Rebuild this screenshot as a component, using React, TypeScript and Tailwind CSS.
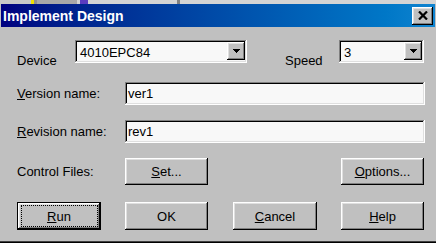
import React from 'react';

const raised =
  'shadow-[inset_-1px_-1px_#000,inset_1px_1px_#fff,inset_-2px_-2px_#808080,inset_2px_2px_#dfdfdf]';

function Arrow() {
  return (
    <svg width="7" height="4" viewBox="0 0 7 4" shapeRendering="crispEdges">
      <rect x="0" y="0" width="7" height="1" fill="#000" />
      <rect x="1" y="1" width="5" height="1" fill="#000" />
      <rect x="2" y="2" width="3" height="1" fill="#000" />
      <rect x="3" y="3" width="1" height="1" fill="#000" />
    </svg>
  );
}

function Combo({ value, width }: { value: string; width: string }) {
  return (
    <div
      className={`${width} h-[23px] shrink-0 flex p-[2px] bg-[#f8f8f8] shadow-[inset_-1px_-1px_#fff,inset_1px_1px_#808080,inset_-2px_-2px_#dfdfdf,inset_2px_2px_#000]`}
    >
      <span className="flex-1 pl-[3px] pt-[3px] leading-[15px]">{value}</span>
      <div className={`w-[18px] h-[18px] bg-[#c0c0c0] flex items-center justify-center ${raised}`}>
        <Arrow />
      </div>
    </div>
  );
}

function Field({ value }: { value: string }) {
  return (
    <div className="w-[300px] h-[23px] shrink-0 flex items-center px-[2px] bg-[#f8f8f8] shadow-[inset_-1px_-1px_#fff,inset_1px_1px_#808080,inset_-2px_-2px_#dfdfdf,inset_2px_2px_#000]">
      <span className="leading-[15px] pl-[1px]">{value}</span>
    </div>
  );
}

function Btn({ children, className = '' }: { children: React.ReactNode; className?: string }) {
  return (
    <button className={`shrink-0 bg-[#c0c0c0] flex items-center justify-center leading-[15px] ${raised} ${className}`}>
      {children}
    </button>
  );
}

export default function App() {
  return (
    <div className="w-[436px] h-[243px] bg-[#c0c0c0] flex flex-col overflow-hidden text-[13px] text-black font-['Liberation_Sans',Arial,sans-serif] shadow-[inset_0_-1px_#000,inset_0_-2px_#404040]">
      {/* leftover strip above the window */}
      <div className="h-[4px] flex shrink-0 bg-[#d4d4d4]">
        <div className="w-[31px] bg-[#c8c8c8]" />
        <div className="w-[3px] bg-[#f0e000]" />
        <div className="w-[3px] bg-[#909090]" />
        <div className="w-[40px] bg-[#a8a8a8]" />
        <div className="w-[3px]" />
        <div className="w-[8px] bg-[#5a3cc0]" />
        <div className="w-[89px]" />
        <div className="w-[3px] bg-[#808080]" />
      </div>

      {/* title bar */}
      <div className="h-[23px] mx-[1px] shrink-0 flex items-center pl-[2px] pr-[2px] bg-linear-to-r from-[#000080] to-[#1084d0]">
        <span className="text-white font-bold text-[14px] leading-[16px]">Implement Design</span>
        <button className={`ml-auto w-[21px] h-[18px] bg-[#c0c0c0] flex items-center justify-center ${raised}`}>
          <svg width="10" height="9" viewBox="0 0 10 9">
            <path d="M1 0.5 L9 8.5 M9 0.5 L1 8.5" stroke="#000" strokeWidth="2.2" />
          </svg>
        </button>
      </div>

      <div className="flex flex-col pl-[17px] pr-[11px]">
        {/* Device / Speed */}
        <div className="mt-[13px] h-[23px] flex items-start">
          <span className="w-[58px] mt-[13px] leading-[15px] shrink-0">Device</span>
          <Combo value="4010EPC84" width="w-[172px]" />
          <span className="ml-[38px] w-[54px] mt-[13px] leading-[15px] shrink-0">Speed</span>
          <Combo value="3" width="w-[85px]" />
        </div>

        {/* Version */}
        <div className="mt-[19px] h-[23px] flex items-center">
          <span className="w-[108px] shrink-0 leading-[15px]">
            <span className="underline">V</span>ersion name:
          </span>
          <Field value="ver1" />
        </div>

        {/* Revision */}
        <div className="mt-[15px] h-[23px] flex items-center">
          <span className="w-[108px] shrink-0 leading-[15px]">
            <span className="underline">R</span>evision name:
          </span>
          <Field value="rev1" />
        </div>

        {/* Control files */}
        <div className="mt-[15px] h-[27px] flex items-center">
          <span className="w-[108px] shrink-0 leading-[15px]">Control Files:</span>
          <Btn className="w-[83px] h-[27px]">
            <span>
              <span className="underline">S</span>et...
            </span>
          </Btn>
          <Btn className="ml-[133px] w-[83px] h-[27px]">
            <span>
              <span className="underline">O</span>ptions...
            </span>
          </Btn>
        </div>

        {/* bottom buttons */}
        <div className="mt-[17px] h-[28px] flex items-center">
          <button className="relative shrink-0 w-[84px] h-[28px] border border-black bg-[#c0c0c0] flex items-center justify-center leading-[15px] shadow-[inset_-1px_-1px_#000,inset_1px_1px_#fff,inset_-2px_-2px_#808080,inset_2px_2px_#dfdfdf]">
            <span className="absolute left-[3px] right-[2px] top-[2px] bottom-[2px] border border-dotted border-black" />
            <span>
              <span className="underline">R</span>un
            </span>
          </button>
          <Btn className="ml-[24px] w-[83px] h-[28px]">OK</Btn>
          <Btn className="ml-[25px] w-[84px] h-[28px]">
            <span>
              <span className="underline">C</span>ancel
            </span>
          </Btn>
          <Btn className="ml-[24px] w-[83px] h-[28px]">
            <span>
              <span className="underline">H</span>elp
            </span>
          </Btn>
        </div>
      </div>
    </div>
  );
}
